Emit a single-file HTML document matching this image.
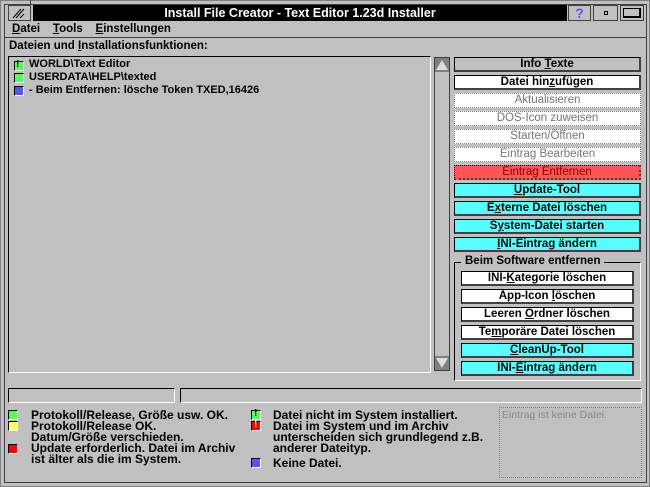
<!DOCTYPE html>
<html><head><meta charset="utf-8"><style>
*{margin:0;padding:0;box-sizing:border-box}
body{width:650px;height:487px;background:#c0c0c0;font-family:"Liberation Sans",sans-serif;font-weight:bold;font-size:11px;color:#000;position:relative;overflow:hidden}
.a{position:absolute}
.btn{position:absolute;height:15px;border:1px solid #000;border-right:2px solid #404040;border-bottom:2px solid #404040;text-align:center;line-height:12px;font-size:11.5px;background:#fff}
.g{background:#c0c0c0}
.c{background:#55ffff}
.r{background:#ff5555;color:#800;font-weight:normal;border-style:dotted}
.d{border:1px dotted #808080;color:#777;font-weight:normal;background:#fff}
.sq{position:absolute;width:10px;height:10px;border:1px solid #000;border-right-color:#fff;border-bottom-color:#fff}
.lg{font-size:12px;line-height:11px}
u{text-decoration:underline}
</style></head><body>
<div class="a" style="left:0;top:0;width:650px;height:487px;border:1px solid #808080"></div>
<div class="a" style="left:4px;top:4px;width:643px;height:479px;border:1px solid #404040"></div>
<div class="a" style="left:30px;top:0;width:1px;height:5px;background:#404040"></div>
<div class="a" style="left:8px;top:5px;width:23px;height:16px;border:1px solid #404040;background:#c0c0c0"></div>
<svg class="a" style="left:12px;top:8px" width="14" height="11"><path d="M1 10L9 1M4 10L12 1M8 10L12 6" stroke="#000" stroke-width="1"/></svg>
<div class="a" style="left:33px;top:5px;width:534px;height:16px;background:#000;color:#fff;text-align:center;line-height:16px;font-size:12.5px">Install File Creator - Text Editor 1.23d Installer</div>
<div class="a" style="left:568px;top:5px;width:23px;height:16px;border:1px solid #404040;background:#c0c0c0;color:#5555ff;text-align:center;font-size:14px;line-height:14px">?</div>
<div class="a" style="left:593px;top:5px;width:25px;height:16px;border:1px solid #404040;background:#c0c0c0"></div>
<div class="a" style="left:604px;top:11px;width:4px;height:4px;border:1px solid #000"></div>
<div class="a" style="left:620px;top:5px;width:24px;height:16px;border:1px solid #404040;background:#c0c0c0"></div>
<div class="a" style="left:623px;top:8px;width:18px;height:10px;border:1px solid #000;border-right-width:2px;border-bottom-width:2px"></div>
<div class="a" style="left:5px;top:37px;width:641px;height:1px;background:#404040"></div>
<div class="a" style="left:12px;top:23px;font-size:11.5px"><u>D</u>atei &nbsp;&nbsp;&nbsp;<u>T</u>ools &nbsp;&nbsp;&nbsp;<u>E</u>instellungen</div>
<div class="a" style="left:9px;top:40px;font-size:11.5px">Dateien und <u>I</u>nstallationsfunktionen:</div>
<div class="a" style="left:8px;top:56px;width:423px;height:317px;border:1px solid #000;border-right-color:#fff;border-bottom-color:#fff"></div>
<div class="sq" style="left:14px;top:61px;background:#55ff55"></div><div class="a" style="left:16px;top:59px;font-size:10px">!</div>
<div class="a" style="left:29px;top:58px">WORLD\Text Editor</div>
<div class="sq" style="left:14px;top:73px;background:#55ff55"></div>
<div class="a" style="left:29px;top:71px">USERDATA\HELP\texted</div>
<div class="sq" style="left:14px;top:86px;background:#5555ff"></div>
<div class="a" style="left:29px;top:84px">- Beim Entfernen: lösche Token TXED,16426</div>
<div class="a" style="left:434px;top:57px;width:16px;height:314px;border:1px solid #404040;background:#c0c0c0"></div>
<svg class="a" style="left:435px;top:58px" width="14" height="14"><rect width="14" height="14" fill="#808080"/><path d="M7 2L13 12H1Z" fill="#ddd"/></svg>
<svg class="a" style="left:435px;top:356px" width="14" height="14"><rect width="14" height="14" fill="#808080"/><path d="M7 12L13 2H1Z" fill="#ddd"/></svg>
<div class="btn g" style="left:454px;top:57px;width:187px">Info <u>T</u>exte</div>
<div class="btn" style="left:454px;top:75px;width:187px">Datei hin<u>z</u>ufügen</div>
<div class="btn d" style="left:454px;top:93px;width:187px">Aktualisieren</div>
<div class="btn d" style="left:454px;top:111px;width:187px">DOS-Icon zuweisen</div>
<div class="btn d" style="left:454px;top:129px;width:187px">Starten/Öffnen</div>
<div class="btn d" style="left:454px;top:147px;width:187px">Eintrag Bearbeiten</div>
<div class="btn r" style="left:454px;top:165px;width:187px">Eintrag Entfernen</div>
<div class="btn c" style="left:454px;top:183px;width:187px"><u>U</u>pdate-Tool</div>
<div class="btn c" style="left:454px;top:201px;width:187px">E<u>x</u>terne Datei löschen</div>
<div class="btn c" style="left:454px;top:219px;width:187px">S<u>y</u>stem-Datei starten</div>
<div class="btn c" style="left:454px;top:237px;width:187px"><u>I</u>NI-Eintrag ändern</div>
<div class="a" style="left:454px;top:262px;width:187px;height:119px;border:1px solid #000;border-right-color:#fff;border-bottom-color:#fff"></div>
<div class="a" style="left:461px;top:255px;background:#c0c0c0;padding:0 4px;font-size:11.5px">Beim Software entfernen</div>
<div class="btn" style="left:461px;top:271px;width:173px">INI-<u>K</u>ategorie löschen</div>
<div class="btn" style="left:461px;top:289px;width:173px">App-Icon <u>l</u>öschen</div>
<div class="btn" style="left:461px;top:307px;width:173px">Leeren <u>O</u>rdner löschen</div>
<div class="btn" style="left:461px;top:325px;width:173px">Te<u>m</u>poräre Datei löschen</div>
<div class="btn c" style="left:461px;top:343px;width:173px"><u>C</u>leanUp-Tool</div>
<div class="btn c" style="left:461px;top:361px;width:173px">INI-<u>E</u>intrag ändern</div>
<div class="a" style="left:8px;top:388px;width:167px;height:15px;border:1px solid #000;border-right-color:#fff;border-bottom-color:#fff"></div>
<div class="a" style="left:180px;top:388px;width:462px;height:15px;border:1px solid #000;border-right-color:#fff;border-bottom-color:#fff"></div>
<div class="sq" style="left:8px;top:410px;background:#55ff55"></div>
<div class="sq" style="left:8px;top:421px;background:#ffff55"></div>
<div class="sq" style="left:8px;top:444px;background:#ff0000"></div>
<div class="a lg" style="left:31px;top:410px">Protokoll/Release, Größe usw. OK.<br>Protokoll/Release OK.<br>Datum/Größe verschieden.<br>Update erforderlich. Datei im Archiv<br>ist älter als die im System.</div>
<div class="sq" style="left:251px;top:410px;background:#55ff55"></div><div class="a" style="left:254px;top:408px;font-size:10px">!</div>
<div class="sq" style="left:251px;top:421px;background:#ff0000"></div><div class="a" style="left:254px;top:419px;font-size:10px;color:#fff">!</div>
<div class="sq" style="left:251px;top:458px;background:#5555ff"></div>
<div class="a lg" style="left:273px;top:410px">Datei nicht im System installiert.<br>Datei im System und im Archiv<br>unterscheiden sich grundlegend z.B.<br>anderer Dateityp.</div>
<div class="a lg" style="left:273px;top:458px">Keine Datei.</div>
<div class="a" style="left:499px;top:407px;width:143px;height:71px;border:1px dotted #808080;color:#888;font-weight:normal;font-size:10.5px;padding:1px 2px">Eintrag ist keine Datei.</div>
</body></html>
